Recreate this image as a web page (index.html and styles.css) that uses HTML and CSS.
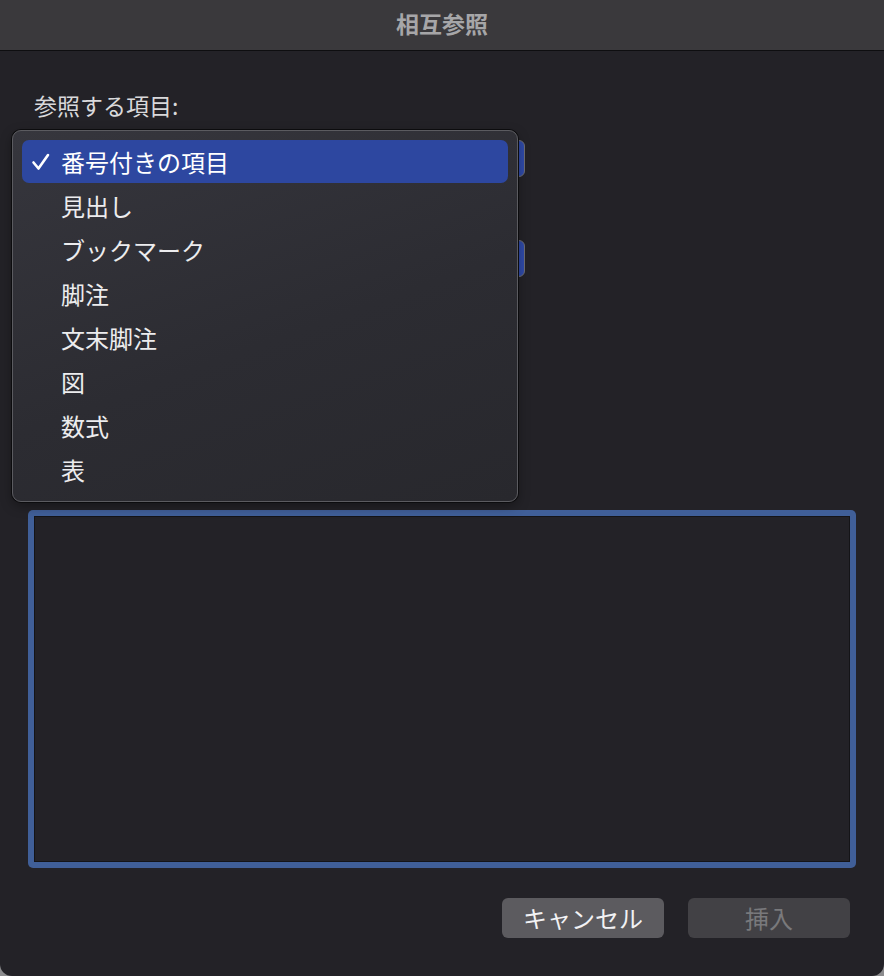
FILE: index.html
```html
<!DOCTYPE html>
<html lang="ja">
<head>
<meta charset="utf-8">
<title>相互参照</title>
<link rel="stylesheet" href="styles.css">
</head>
<body>
<div class="window">
  <div class="titlebar">相互参照</div>
  <div class="content">
    <div class="label">参照する項目:</div>
    <div class="popup popup-first"></div>
    <div class="popup popup-second"></div>
    <div class="listbox"><div class="listbox-inner"></div></div>
    <div class="buttons">
      <div class="btn btn-cancel">キャンセル</div>
      <div class="btn btn-insert">挿入</div>
    </div>
    <div class="menu">
      <div class="item selected">
        <svg class="check" width="20" height="20" viewBox="0 0 20 20"><path d="M2.5 10.5 L7.5 16.5 L17 3" fill="none" stroke="#ffffff" stroke-width="2.6" stroke-linecap="round" stroke-linejoin="round"/></svg>
        番号付きの項目
      </div>
      <div class="item">見出し</div>
      <div class="item">ブックマーク</div>
      <div class="item">脚注</div>
      <div class="item">文末脚注</div>
      <div class="item">図</div>
      <div class="item">数式</div>
      <div class="item">表</div>
    </div>
  </div>
</div>
</body>
</html>
```
FILE: styles.css
```css
html, body {
  margin: 0;
  padding: 0;
  background: #8c8c8e;
}
body {
  font-family: "Noto Sans CJK JP", "Noto Sans", sans-serif;
}
.window {
  width: 884px;
  height: 976px;
  background: #232227;
  border-radius: 0 0 12px 12px;
  overflow: hidden;
  display: flex;
  flex-direction: column;
}
.titlebar {
  height: 50px;
  flex: none;
  background: #3a393c;
  border-bottom: 1px solid #0e0e10;
  color: #a6a6a8;
  font-size: 23px;
  font-weight: 700;
  line-height: 46px;
  text-align: center;
}
.content {
  position: relative;
  flex: 1;
  display: flex;
  flex-direction: column;
  padding: 41px 34px 0 28px;
}
.label {
  margin-left: 6px;
  color: #d9d9db;
  font-size: 23px;
  line-height: 26px;
}
.popup {
  width: 495px;
  height: 35px;
  background: #2f4aa8;
  border: 1px solid #6d6d71;
  border-radius: 6px;
}
.popup-first {
  margin-top: 22px;
}
.popup-second {
  margin-top: 63px;
}
.listbox {
  margin-top: 233px;
  width: 816px;
  height: 346px;
  padding: 6px;
  background: #405f98;
  border-radius: 5px;
}
.listbox-inner {
  height: 100%;
  box-sizing: border-box;
  border: 1px solid #141417;
  background: #232227;
}
.buttons {
  margin-top: 30px;
  display: flex;
  justify-content: flex-end;
  gap: 24px;
}
.btn {
  width: 162px;
  height: 40px;
  border-radius: 6px;
  font-size: 24px;
  line-height: 40px;
  text-align: center;
}
.btn-cancel {
  background: #5c5b5f;
  color: #f2f2f4;
}
.btn-insert {
  background: #424145;
  color: #79797c;
}
.menu {
  position: absolute;
  left: 12px;
  top: 79px;
  width: 506px;
  padding: 9px 9px 9px;
  background: linear-gradient(160deg, #36363d 0%, #2c2c32 55%, #28282d 100%);
  border: 1px solid #5b5b60;
  border-radius: 9px;
  box-shadow: 0 0 0 1px #0c0c0e, 0 4px 12px rgba(0,0,0,0.35);
  box-sizing: border-box;
  display: flex;
  flex-direction: column;
}
.item {
  position: relative;
  height: 44px;
  padding-left: 39px;
  color: #ececee;
  font-size: 24px;
  line-height: 44px;
  border-radius: 7px;
}
.item.selected {
  height: 43px;
  line-height: 43px;
  margin-bottom: 1px;
  background: #2d47a0;
  color: #ffffff;
}
.check {
  position: absolute;
  left: 9px;
  top: 12px;
}
```
